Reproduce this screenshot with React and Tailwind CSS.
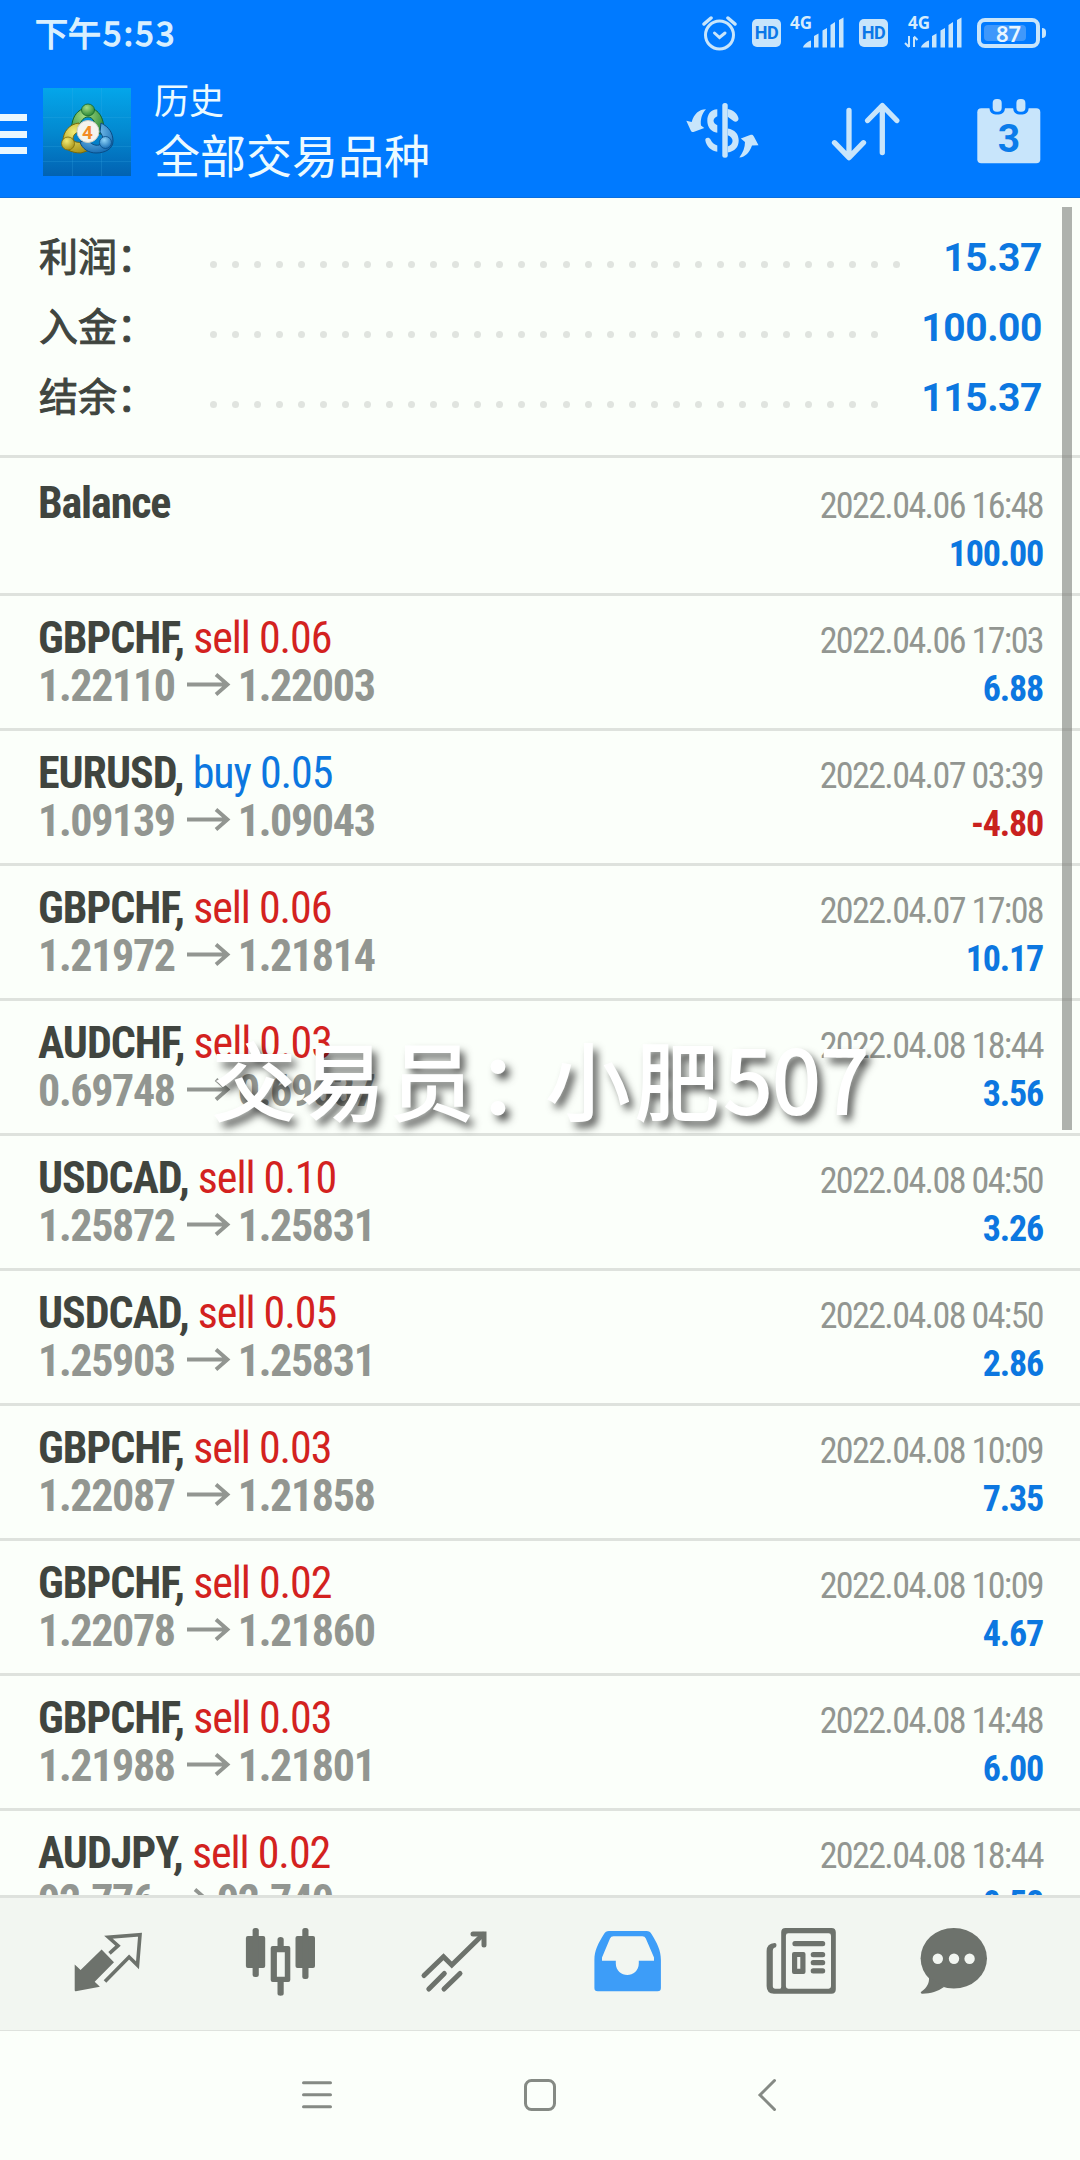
import React from 'react';

const summary = [
  { label: '利润', value: '15.37', dots: 32 },
  { label: '入金', value: '100.00', dots: 31 },
  { label: '结余', value: '115.37', dots: 31 },
];

const deals = [
  { symbol: 'GBPCHF', side: 'sell', lots: '0.06', open: '1.22110', close: '1.22003', time: '2022.04.06 17:03', profit: '6.88' },
  { symbol: 'EURUSD', side: 'buy', lots: '0.05', open: '1.09139', close: '1.09043', time: '2022.04.07 03:39', profit: '-4.80' },
  { symbol: 'GBPCHF', side: 'sell', lots: '0.06', open: '1.21972', close: '1.21814', time: '2022.04.07 17:08', profit: '10.17' },
  { symbol: 'AUDCHF', side: 'sell', lots: '0.03', open: '0.69748', close: '0.69637', time: '2022.04.08 18:44', profit: '3.56' },
  { symbol: 'USDCAD', side: 'sell', lots: '0.10', open: '1.25872', close: '1.25831', time: '2022.04.08 04:50', profit: '3.26' },
  { symbol: 'USDCAD', side: 'sell', lots: '0.05', open: '1.25903', close: '1.25831', time: '2022.04.08 04:50', profit: '2.86' },
  { symbol: 'GBPCHF', side: 'sell', lots: '0.03', open: '1.22087', close: '1.21858', time: '2022.04.08 10:09', profit: '7.35' },
  { symbol: 'GBPCHF', side: 'sell', lots: '0.02', open: '1.22078', close: '1.21860', time: '2022.04.08 10:09', profit: '4.67' },
  { symbol: 'GBPCHF', side: 'sell', lots: '0.03', open: '1.21988', close: '1.21801', time: '2022.04.08 14:48', profit: '6.00' },
  { symbol: 'AUDJPY', side: 'sell', lots: '0.02', open: '92.776', close: '92.740', time: '2022.04.08 18:44', profit: '0.58' },
];

function HdBadge({ className }) {
  return (
    <span className={`flex h-7 w-[29px] items-center justify-center rounded-[5px] bg-[#c8e5fb] font-['Roboto'] text-[18px] font-bold leading-none tracking-[-0.5px] text-[#0b78e8] ${className}`}>
      HD
    </span>
  );
}

function Signal({ className, data }) {
  return (
    <span className={`relative block h-[34px] ${className}`}>
      <span className="absolute left-[4px] top-[-2px] font-['Noto_Sans'] text-[17px] font-bold leading-[18px] text-[#d5ecfd]">4G</span>
      <svg className="absolute left-0 top-0" width="58" height="34" viewBox="0 0 58 34" fill="#c8e5fb">
        <path d="M17 31.500c0-2 4-6 8-7v7z" />
        <path d="M28 20l4.500-2.500v14H28zM36.500 14.500L41 12v19.500h-4.500zM44.500 9L49 6v25.500h-4.500zM53 4l4.500-2.500v30H53z" />
        {data && <path d="M5 20v11M5 31l-4-4M10 31V21M10 20.500l3.500 3.500" fill="none" stroke="#c8e5fb" strokeWidth="2" />}
      </svg>
    </span>
  );
}

function StatusBar() {
  return (
    <div className="flex h-[66px] items-start pl-[35px] pt-4">
      <span className="mt-[-2px] w-[667px] font-['Noto_Sans_CJK_SC',sans-serif] text-[33px] leading-[36px] text-[#d9effe] [-webkit-text-stroke:1.3px_#d9effe]">
        下午<span className="ml-[2px] tracking-[2.400px]">5:53</span>
      </span>
      <svg width="35" height="36" viewBox="0 0 35 36" fill="none" stroke="#c8e5fb" strokeWidth="3" strokeLinecap="round">
        <circle cx="17.500" cy="19" r="14" />
        <path d="M2 8l7-6M33 8l-7-6" strokeWidth="3.500" />
        <path d="M12.500 17l5 4.500 5.500-4.500" />
      </svg>
      <HdBadge className="ml-[15px] mt-[3px]" />
      <Signal className="ml-[5px] w-[58px]" />
      <HdBadge className="ml-[15px] mt-[3px]" />
      <Signal className="ml-[16px] w-[58px]" data />
      <div className="relative ml-[15px] mt-[2px] flex h-[30px] w-[63px] items-center justify-center rounded-lg border-[4px] border-[#c8e5fb]">
        <span className="absolute left-[3px] top-[3px] h-4 w-[42px] rounded-sm bg-[#3f98fb]" />
        <span className="relative font-['Noto_Sans'] text-[22px] font-semibold leading-none text-[#eaf6ff]">87</span>
        <span className="absolute -right-[10px] top-[6px] h-[10px] w-[4px] rounded-r bg-[#c8e5fb]" />
      </div>
    </div>
  );
}

function AppLogo() {
  return (
    <svg width="88" height="88" viewBox="0 0 88 88">
      <defs>
        <linearGradient id="sky" x1="0" y1="0" x2="0" y2="1">
          <stop offset="0" stopColor="#04a6ea" />
          <stop offset="0.5" stopColor="#0389d0" />
          <stop offset="1" stopColor="#0262b2" />
        </linearGradient>
        <radialGradient id="green" cx="0.4" cy="0.3" r="0.8">
          <stop offset="0" stopColor="#a5dc84" />
          <stop offset="1" stopColor="#197c2c" />
        </radialGradient>
        <radialGradient id="yellow" cx="0.4" cy="0.3" r="0.8">
          <stop offset="0" stopColor="#f3ec74" />
          <stop offset="1" stopColor="#a08a10" />
        </radialGradient>
        <radialGradient id="blue" cx="0.4" cy="0.3" r="0.8">
          <stop offset="0" stopColor="#8fd4f8" />
          <stop offset="1" stopColor="#0a62ae" />
        </radialGradient>
      </defs>
      <rect width="88" height="88" fill="url(#sky)" />
      <path d="M0 29.500h88M0 58.500h88M0 73.500h88M29.500 0v88M58.500 0v88" stroke="#3fb2ea" strokeOpacity="0.2" />
      <path d="M29 45c-2-14 5-25 16-25s18 12 15 27l-7-3c0-9-3-15-8-15s-9 6-9 13z" fill="url(#green)" stroke="#14652a" />
      <path d="M36 35c-9 1-16 8-16 18 0 8 8 12 18 12l9-3-6-8c-6 1-11 0-11-3 0-4 3-7 8-8z" fill="url(#yellow)" stroke="#786a0d" />
      <path d="M58 35c8 4 12 10 12 18 0 8-8 12-17 12-7 0-14-4-16-11l8-2c3 4 7 6 11 5 5-2 5-8 1-13z" fill="url(#blue)" stroke="#0a4c86" />
      <ellipse cx="45" cy="22" rx="6.500" ry="6" fill="url(#green)" stroke="#14652a" strokeWidth="0.800" />
      <circle cx="25" cy="55.500" r="6.500" fill="url(#yellow)" stroke="#786a0d" strokeWidth="0.800" />
      <circle cx="62.500" cy="54.500" r="6" fill="url(#blue)" stroke="#0a4c86" strokeWidth="0.800" />
      <circle cx="45" cy="43.500" r="11" fill="#f4f4ee" stroke="#c8cdc4" />
      <text x="44.500" y="50.500" textAnchor="middle" fontFamily="Roboto" fontSize="19" fontWeight="700" fill="#f28c28">4</text>
    </svg>
  );
}

function CurrencyIcon() {
  return (
    <svg width="74" height="62" viewBox="0 0 74 62" fill="#c8e5fb">
      <path d="M.3 20.700l5.400 1.300C8 14 13 9.300 20 9.300c-4.500 4.700-5.700 10.700-5 16.200l3.300 2.500L7.500 32c-1.500.300-2.500-.500-3-2z" />
      <path d="M31.300 9.300c-6.500 0-10 5-10 11.400s4 11.300 10 12v-7.500c-5-2-5-7 0-9z" />
      <path d="M19.300 40c0-2.500 4-3 5.200-.500 1.300 3 3.500 5 6.800 6v6.200c-6-.500-11.300-5.700-12-11.700z" />
      <rect x="36.300" y="3" width="5.400" height="54.700" rx="2.500" />
      <path d="M41.700 9c6 1 10 5 10.800 9.300.3 3-3 4.500-5 2.700l-5.800-4.300z" />
      <path fillRule="evenodd" d="M41.700 28.500c7 1 11 5.500 11 12s-4 11-11 12zm0 6.800v11.200c6.500-2 6.500-9 0-11.200z" />
      <path d="M72.500 45.300l-6.500.200C63.500 52.500 59.500 57 53.300 57.500c3.700-5 5.700-10 5.700-15.500L54.800 38.500l10-3.700c1.500-.300 2.500.300 3.200 2z" />
    </svg>
  );
}

function SortIcon() {
  return (
    <svg width="71" height="62" viewBox="0 0 71 62" fill="none" stroke="#c8e5fb" strokeWidth="5.300" strokeLinecap="round" strokeLinejoin="round">
      <path d="M19 10.500V57M4.500 42.700L19 57.700l14.500-15" />
      <path d="M52.300 52.500V6M37.600 20.500L52.300 5.500l14.500 15" />
    </svg>
  );
}

function CalendarIcon() {
  return (
    <svg width="66" height="67" viewBox="0 0 66 67">
      <rect x="1.300" y="10.300" width="63" height="55" rx="4" fill="#c8e5fb" />
      <rect x="13.500" y="-2" width="15.400" height="18.500" rx="6" fill="#007aff" />
      <rect x="37.200" y="-2" width="15.400" height="18.500" rx="6" fill="#007aff" />
      <rect x="16.700" y="1" width="9" height="12.800" rx="4" fill="#c8e5fb" />
      <rect x="40.400" y="1" width="9" height="12.800" rx="4" fill="#c8e5fb" />
      <text x="33" y="53.500" textAnchor="middle" fontFamily="Roboto" fontSize="39" fontWeight="700" fill="#0b7cea">3</text>
    </svg>
  );
}

function Header() {
  return (
    <header className="h-[198px] shrink-0 border-b border-[#0a6fe0] bg-[#007aff]">
      <StatusBar />
      <div className="flex items-start">
        <div className="mt-12 flex w-[27px] flex-col gap-[9.500px]">
          <span className="h-[7px] bg-[#e9f7ff]" />
          <span className="h-[7px] bg-[#e9f7ff]" />
          <span className="h-[7px] bg-[#e9f7ff]" />
        </div>
        <div className="ml-4 mt-[22px]">
          <AppLogo />
        </div>
        <div className="ml-[23px] mt-[12px] w-[532px] font-['Noto_Sans_CJK_SC',sans-serif] text-[#ecfaff]">
          <div className="text-[35px] leading-[42px]">历史</div>
          <div className="mt-[4px] text-[46px] leading-[58px]">全部交易品种</div>
        </div>
        <div className="mt-[34px]">
          <CurrencyIcon />
        </div>
        <div className="ml-[70px] mt-[34px]">
          <SortIcon />
        </div>
        <div className="ml-[75px] mt-8">
          <CalendarIcon />
        </div>
      </div>
    </header>
  );
}

function Summary() {
  return (
    <section className="h-[260px] shrink-0 border-b-[3px] border-[#dee2dd] pt-[23px]">
      {summary.map((row) => (
        <div key={row.label} className="flex h-[70px] items-center pl-[39px] pr-[38px]">
          <span className="mt-[-4px] w-[171px] font-['Noto_Sans_CJK_SC',sans-serif] text-[39px] leading-[66px] text-[#40453f] [-webkit-text-stroke:1px_#40453f]">{row.label}：</span>
          <span className="mt-[17px] flex gap-[15.040px]">
            {Array.from({ length: row.dots }, (_, i) => (
              <span key={i} className="h-[7px] w-[7px] rounded-full bg-[#e0e4df]" />
            ))}
          </span>
          <span className="ml-auto mt-[5px] font-['Roboto'] text-[39px] font-bold leading-[67px] tracking-[-0.400px] text-[#0c77e0] [font-stretch:100%]">{row.value}</span>
        </div>
      ))}
    </section>
  );
}

function DealRow({ deal }) {
  return (
    <div className="h-[135px] shrink-0 border-b-[3px] border-[#dee2dd] pl-[38px] pr-[37px] pt-[18px]">
      <div className="flex h-12 items-baseline justify-between text-[44px] leading-[48px]">
        <span className="font-bold tracking-[-1.050px] text-[#40453f]">
          {deal.symbol},{' '}
          <span className={`font-normal ${deal.side === 'buy' ? 'text-[#0c77e0]' : 'text-[#d3221f]'}`}>
            {deal.side} {deal.lots}
          </span>
        </span>
        <span className="text-[36px] tracking-[-1.600px] text-[#929691]">{deal.time}</span>
      </div>
      <div className="flex h-12 items-baseline justify-between text-[44px] leading-[48px]">
        <span className="font-bold tracking-[-1.350px] text-[#929691]">
          {deal.open}
          <svg className="ml-[12px] mr-[7px] inline-block align-[5px]" width="44" height="23" viewBox="0 0 44 23" fill="none" stroke="#929691" strokeWidth="3.800">
            <path d="M0 11.500h41M29 1.500l11.500 10L29 21.500" />
          </svg>
          {deal.close}
        </span>
        <span className={`text-[36px] font-bold tracking-[-1.200px] ${deal.profit.startsWith('-') ? 'text-[#c9211e]' : 'text-[#0c77e0]'}`}>{deal.profit}</span>
      </div>
    </div>
  );
}

function TabBar() {
  return (
    <nav className="flex h-[136px] shrink-0 items-start border-b border-t-[3px] border-b-[#dee2dd] border-t-[#dee2dd] bg-[#f2f6f1] pl-[74px] pt-7">
      {/* Quotes */}
      <svg width="68" height="72" viewBox="0 0 68 72" fill="#6d726c">
        <path d="M.7 38.500l5.900 5.500 21-20.500L40 36.300 20.700 55.700l5.200 5L1.800 65.300Q.7 65.500.7 64z" />
        <path d="M31 55.500L55.100 31l8.400 8.300L66 8.700 34.500 11.300l9.500 8.400-8.500 7.600" fill="none" stroke="#6d726c" strokeWidth="3.600" />
      </svg>
      {/* Chart */}
      <svg className="ml-[103px]" width="71" height="72" viewBox="0 0 71 72" fill="#6d726c">
        <rect x="0.900" y="10" width="19.300" height="32" rx="2" />
        <rect x="7.600" y="2" width="6.200" height="49" rx="2.500" />
        <path fillRule="evenodd" d="M27.700 20h15.600q2 0 2 2v32q0 2-2 2H27.700q-2 0-2-2V22q0-2 2-2zm4.200 6.300v24.400h7.900V26.300z" />
        <path d="M32.500 20.500v-7q0-2.500 3.100-2.500t3.100 2.500v7zM32.500 55.500v12q0 2.200 3.100 2.200t3.100-2.200v-12z" />
        <rect x="50.500" y="10" width="19.500" height="32" rx="2" />
        <rect x="57.300" y="2" width="6.200" height="51" rx="2.500" />
      </svg>
      {/* Trade */}
      <svg className="ml-[104px]" width="68" height="72" viewBox="0 0 68 72" fill="none" stroke="#6d726c" strokeWidth="5" strokeLinecap="round">
        <path d="M4 49.500l19.500-18.800 8.300 8.300L63 8.500" strokeLinejoin="miter" />
        <path d="M53 8h11v11" />
        <path d="M8.800 63l15.500-15.500M24 63l16-15.500" />
      </svg>
      {/* History */}
      <svg className="ml-[106px]" width="68" height="72" viewBox="0 0 68 72" fill="#3d9df8">
        <path fillRule="evenodd" d="M15 5h37.500q3.500 0 5 3C63 17 66.900 24 66.900 34v28q0 3.300-3.300 3.300H3.700Q.4 65.300.4 62V34C.4 24 4.500 17 10 8q1.500-3 5-3zm4.500 5.200q-2.500 0-3.500 2.300L8 31.500V34.800h13.800v2.500c0 15.500 23 15.500 23 0v-2.500H60V31.500L51.800 12.500q-1-2.300-3.500-2.300z" />
      </svg>
      {/* News */}
      <svg className="ml-[104px]" width="70" height="72" viewBox="0 0 70 72" fill="#6d726c">
        <path fillRule="evenodd" d="M19.500 2h46q4.300 0 4.300 4.300v57q0 4.400-4.300 4.400H8Q.6 67.700.6 60V25q0-7.500 8-8 2.200 0 1.800 3-.3 1.700-2 1.700-1.600.5-1.600 3V60q0 2.700 2.600 2.700H14q1.200 0 1.200-2V6.300Q15.200 2 19.500 2zm2.800 5.300q-2.400 0-2.400 2.400v50.600q0 2.400 2.400 2.400h40.300q2.400 0 2.400-2.400V9.700q0-2.400-2.400-2.400z" />
        <rect x="26.400" y="15" width="32.800" height="5.200" rx="2.500" />
        <path fillRule="evenodd" d="M28 26h9.500q2 0 2 2v18q0 2-2 2H28q-2 0-2-2V28q0-2 2-2zm3.200 5v11.700h3.100V31z" />
        <rect x="44.700" y="26" width="14.500" height="5.200" rx="2.500" />
        <rect x="44.700" y="34.100" width="14.500" height="5.200" rx="2.500" />
        <rect x="44.700" y="42.300" width="14.500" height="5.200" rx="2.500" />
      </svg>
      {/* Messages */}
      <svg className="ml-[84px]" width="68" height="72" viewBox="0 0 68 72" fill="#6d726c">
        <ellipse cx="33.800" cy="32.300" rx="33.200" ry="30.300" />
        <path d="M9 51c.5 6-2 10.500-7.500 14.500-1.500 1.300-.5 2.300 1 2.200C11 67.500 17.500 65.500 24 61z" />
        <g fill="#f2f6f1">
          <circle cx="17.800" cy="32.700" r="5.200" />
          <circle cx="34" cy="32.700" r="5.200" />
          <circle cx="49.600" cy="32.700" r="5.200" />
        </g>
      </svg>
    </nav>
  );
}

function SystemNav() {
  return (
    <div className="flex flex-1 items-start pl-[301px] pt-[46px]">
      <svg width="32" height="36" viewBox="0 0 32 36" stroke="#858a84" strokeWidth="3" strokeLinecap="round">
        <path d="M2.500 5.700h27M2.500 17.700h27M2.500 29.700h27" />
      </svg>
      <svg className="ml-[190px]" width="34" height="36" viewBox="0 0 34 36" fill="none" stroke="#858a84" strokeWidth="3">
        <rect x="2.500" y="3.500" width="29" height="29" rx="6" />
      </svg>
      <svg className="ml-[200px]" width="22" height="36" viewBox="0 0 22 36" fill="none" stroke="#858a84" strokeWidth="3" strokeLinecap="round">
        <path d="M17.500 3.500L3 18l14.500 14.500" />
      </svg>
    </div>
  );
}

export default function App() {
  return (
    <div className="relative flex h-[2160px] w-[1080px] flex-col overflow-hidden bg-[#fbfffa]">
      <Header />

      <main className="relative flex h-[1697px] shrink-0 flex-col overflow-hidden font-['Roboto_Condensed','Roboto',sans-serif] [font-stretch:75%]">
        <Summary />
        <div className="h-[138px] shrink-0 border-b-[3px] border-[#dee2dd] pl-[38px] pr-[37px] pt-[21px]">
          <div className="flex h-12 items-baseline justify-between text-[44px] leading-[48px]">
            <span className="font-bold tracking-[-1.150px] text-[#40453f]">Balance</span>
            <span className="text-[36px] tracking-[-1.600px] text-[#929691]">2022.04.06 16:48</span>
          </div>
          <div className="flex h-12 items-baseline justify-between text-[44px] leading-[48px]">
            <span>&nbsp;</span>
            <span className="text-[36px] font-bold tracking-[-1.200px] text-[#0c77e0]">100.00</span>
          </div>
        </div>
        {deals.map((deal, i) => (
          <DealRow key={i} deal={deal} />
        ))}

        {/* Scroll indicator */}
        <div className="absolute right-2 top-[9px] h-[923px] w-[10px] bg-[#7b7f7a]/60" />
      </main>

      <TabBar />
      <SystemNav />

      {/* Author watermark */}
      <div className="absolute left-[212px] top-[1012px] whitespace-nowrap font-['Noto_Sans_CJK_SC',sans-serif] text-[84px] leading-[128px] tracking-[5px] text-white [-webkit-text-stroke:2px_white] [text-shadow:5px_6px_8px_rgba(0,0,0,0.8)]">
        交易员<span className="ml-[-2px] mr-[-20px]">：</span>小肥<span className="text-[87px] tracking-[0px]">507</span>
      </div>
    </div>
  );
}
